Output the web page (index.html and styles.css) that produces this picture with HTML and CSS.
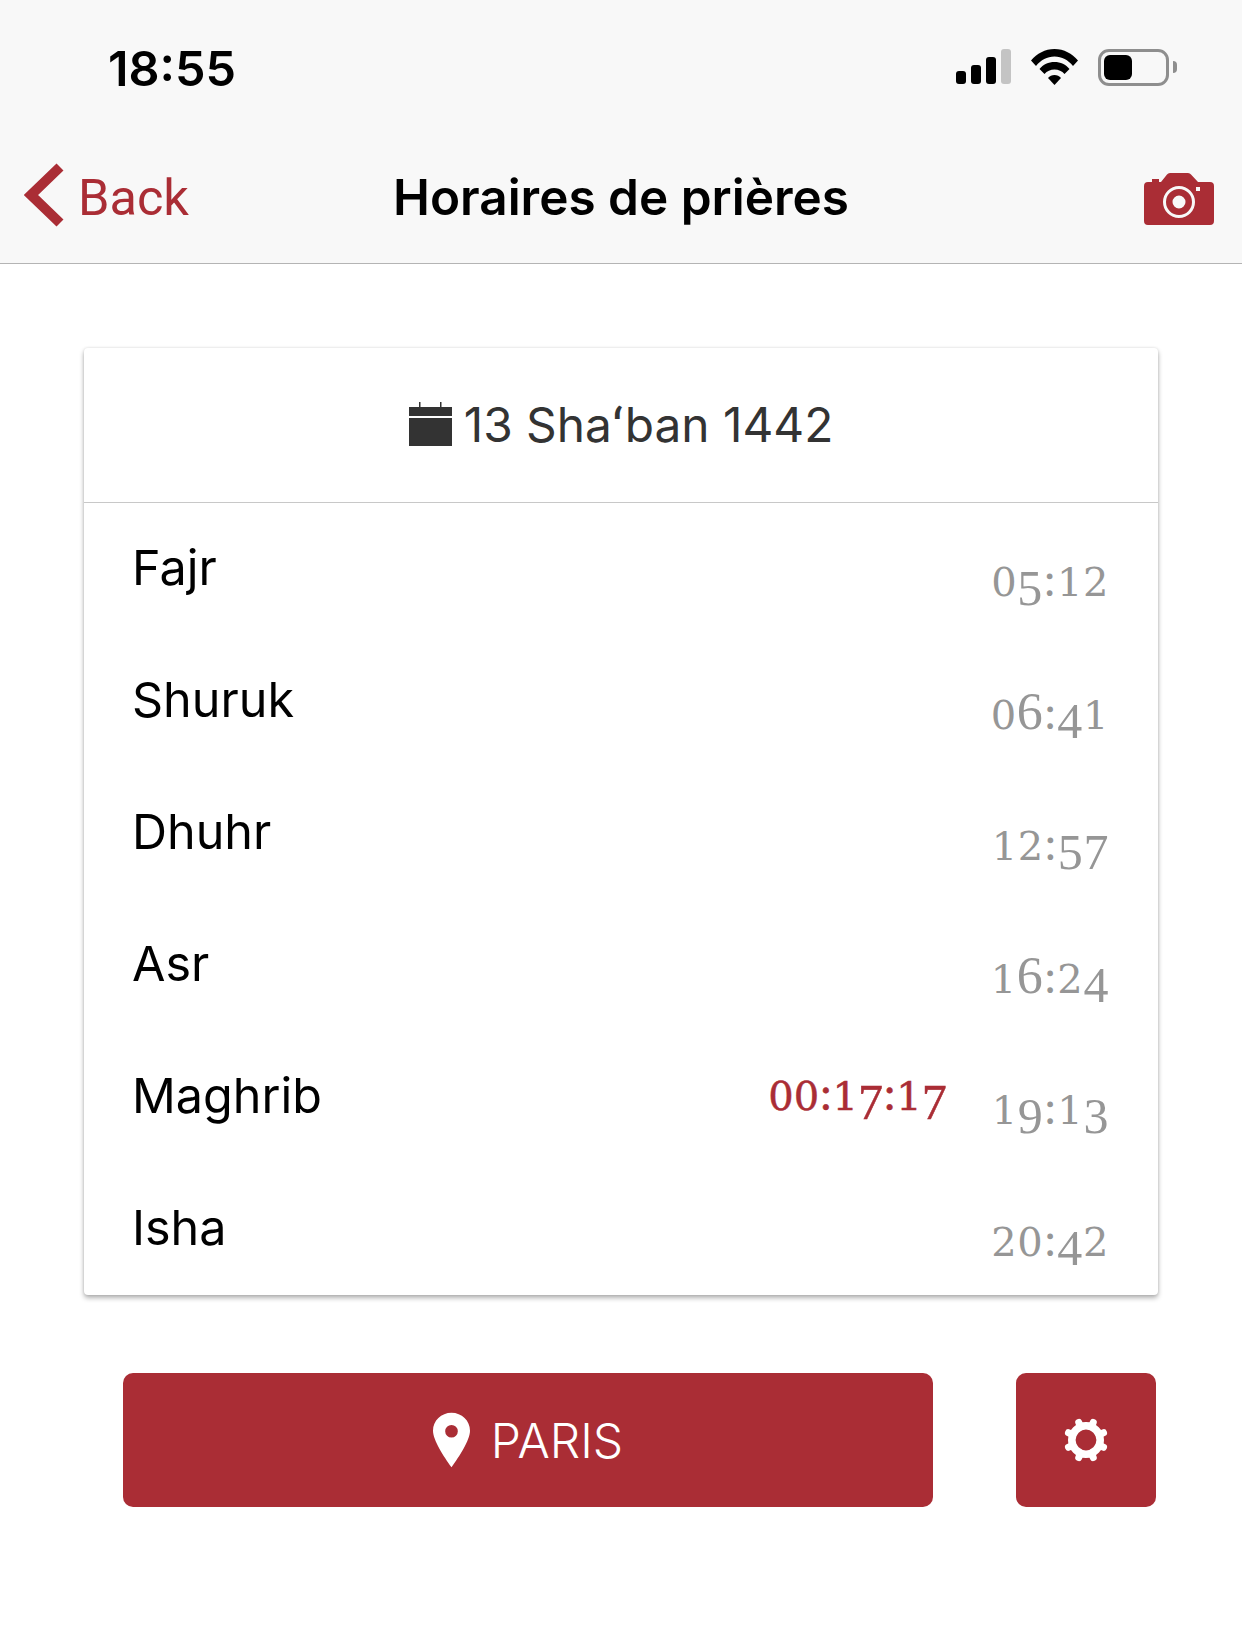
FILE: index.html
```html
<!DOCTYPE html>
<html lang="fr">
<head>
<meta charset="utf-8">
<title>Horaires de prières</title>
<link rel="stylesheet" href="styles.css">
</head>
<body>
<header class="top">
  <div class="status">
    <span class="clock">18:55</span>
    <div class="status-icons">
      <svg class="signal" width="55" height="36" viewBox="0 0 55 36"><rect x="0" y="22" width="10" height="13" rx="3" fill="#000"/><rect x="15" y="16" width="10" height="19" rx="3" fill="#000"/><rect x="30" y="8" width="10" height="27" rx="3" fill="#000"/><rect x="45" y="0" width="10" height="35" rx="3" fill="#c4c4c4"/></svg>
      <svg class="wifi" width="47" height="36" viewBox="0 0 47 36"><path d="M0 11.5C6 4.5 14 0 23.5 0S41 4.500 47 11.500L42 17C37 11 31 7.500 23.500 7.500S10 11 5 17Z" fill="#000"/><path d="M8.500 20C12 15.500 17.500 13 23.500 13S35 15.500 38.500 20L33.500 25C31 22 27.500 20.500 23.500 20.500S16 22 13.500 25Z" fill="#000"/><path d="M17 29C18.500 27 21 26 23.500 26S28.500 27 30 29L23.500 36Z" fill="#000"/></svg>
      <div class="battery"><div class="battery-level"></div></div>
      <div class="battery-nub"></div>
    </div>
  </div>
  <nav class="nav">
    <div class="back">
      <svg width="40" height="64" viewBox="0 0 40 64"><path d="M36 4 7 32 36 60" fill="none" stroke="#aa2d35" stroke-width="10"/></svg>
      <span>Back</span>
    </div>
    <h1 class="title">Horaires de prières</h1>
    <svg class="camera" width="70" height="52" viewBox="0 0 70 52"><path fill="#aa2d35" fill-rule="evenodd" d="M4 9H8V6H15V9H17L23 1.500Q24 0 26 0H44Q46 0 47 1.500L54 9H66Q70 9 70 13V48Q70 52 66 52H4Q0 52 0 48V13Q0 9 4 9ZM35 13A16 16 0 1 0 35 45 16 16 0 1 0 35 13ZM35 16A13 13 0 1 1 35 42 13 13 0 1 1 35 16ZM35 22.500A6.500 6.500 0 1 0 35 35.500 6.500 6.500 0 1 0 35 22.500ZM52 14V18H56V14Z"/></svg>
  </nav>
</header>
<main class="content">
  <section class="card">
    <div class="card-head">
      <svg width="43" height="44" viewBox="0 0 43 44"><path fill="#333" d="M0 5H10V0H11.500V5H31V0H32.500V5H43V14H0ZM0 16H43V44H0Z"/></svg>
      <span>13 Shaʻban 1442</span>
    </div>
    <div class="row"><span class="name">Fajr</span><span class="time"><i class="lo">0</i><i class="de">5</i>:<i class="lo">1</i><i class="lo">2</i></span></div>
    <div class="row"><span class="name">Shuruk</span><span class="time"><i class="lo">0</i><i class="hi">6</i>:<i class="de">4</i><i class="lo">1</i></span></div>
    <div class="row"><span class="name">Dhuhr</span><span class="time"><i class="lo">1</i><i class="lo">2</i>:<i class="de">5</i><i class="de">7</i></span></div>
    <div class="row"><span class="name">Asr</span><span class="time"><i class="lo">1</i><i class="hi">6</i>:<i class="lo">2</i><i class="de">4</i></span></div>
    <div class="row"><span class="name">Maghrib</span><span class="countdown"><i class="lo">0</i><i class="lo">0</i>:<i class="lo">1</i><i class="de">7</i>:<i class="lo">1</i><i class="de">7</i></span><span class="time"><i class="lo">1</i><i class="de">9</i>:<i class="lo">1</i><i class="de">3</i></span></div>
    <div class="row"><span class="name">Isha</span><span class="time"><i class="lo">2</i><i class="lo">0</i>:<i class="de">4</i><i class="lo">2</i></span></div>
  </section>
  <div class="actions">
    <button class="btn btn-city">
      <svg width="37" height="56" viewBox="0 0 38 56"><path fill="#fff" fill-rule="evenodd" d="M19 0C8.500 0 0 8 0 18.500 0 28 11 45 19 56 27 45 38 28 38 18.500 38 8 29.500 0 19 0ZM19 12.500A6.500 6.500 0 1 1 19 25.500 6.500 6.500 0 1 1 19 12.500Z"/></svg>
      <span>PARIS</span>
    </button>
    <button class="btn btn-gear" aria-label="Réglages">
      <svg width="46" height="46" viewBox="-23 -23 46 46"><g stroke="#fff" stroke-width="7" stroke-linecap="round"><line y1="-14" y2="-19" transform="rotate(22.500)"/><line y1="-14" y2="-19" transform="rotate(67.500)"/><line y1="-14" y2="-19" transform="rotate(112.500)"/><line y1="-14" y2="-19" transform="rotate(157.500)"/><line y1="-14" y2="-19" transform="rotate(202.500)"/><line y1="-14" y2="-19" transform="rotate(247.500)"/><line y1="-14" y2="-19" transform="rotate(292.500)"/><line y1="-14" y2="-19" transform="rotate(337.500)"/></g><circle r="14.200" fill="none" stroke="#fff" stroke-width="7.600"/></svg>
    </button>
  </div>
</main>
</body>
</html>
```
FILE: styles.css
```css
* { box-sizing: border-box; }
html, body { margin: 0; padding: 0; }
body { width: 1242px; height: 1647px; background: #fff; font-family: Inter, "Liberation Sans", sans-serif; color: #000; overflow: hidden; }

.top { height: 264px; background: #f8f8f8; border-bottom: 1px solid #b4b4b4; }
.status { height: 132px; display: flex; align-items: center; padding: 4px 65px 0 108px; justify-content: space-between; }
.clock { font-size: 48.500px; font-weight: 600; }
.status-icons { display: flex; align-items: center; margin-top: -2px; }
.signal { margin-right: 20px; }
.wifi { margin-right: 20px; }
.battery { width: 71px; height: 37px; border: 3px solid #8e8e8e; border-radius: 11px; padding: 3px; }
.battery-level { width: 28px; height: 25px; background: #000; border-radius: 6px; }
.battery-nub { width: 4px; height: 12px; background: #8e8e8e; border-radius: 0 6px 6px 0; margin-left: 4px; }

.nav { height: 131px; display: grid; grid-template-columns: 1fr auto 1fr; align-items: center; padding: 0 26px; }
.back { display: flex; align-items: center; gap: 14px; margin-left: -2px; color: #aa2d35; font-family: Roboto, sans-serif; font-size: 50.500px; }
.back svg { margin-top: -6px; }
.title { margin: 0; font-size: 49.500px; font-weight: 600; line-height: 1; }
.camera { display: block; justify-self: end; margin: 2px 2px 0 0; }

.content { padding: 84px 84px 0; }
.card { background: #fff; border-radius: 4px; box-shadow: 0 3px 5px rgba(0,0,0,.3), 0 0 3px rgba(0,0,0,.12); }
.card-head { height: 155px; border-bottom: 1px solid #c8c8c8; display: flex; align-items: center; justify-content: center; gap: 12px; font-size: 47.800px; color: #333; }
.card-head svg { margin-top: -2px; }
.row { height: 132px; display: flex; align-items: center; padding: 0 49px 3px 48px; font-size: 48.500px; }
.name { flex: 1; }

.time, .countdown { display: block; height: 50px; line-height: 50px; font-family: "Liberation Serif", serif; font-size: 48px; white-space: nowrap; }
.time { color: #969696; margin-top: 25px; letter-spacing: .6px; }
.countdown { color: #aa2d35; margin: 0 45px 3px 0; -webkit-text-stroke: .5px #aa2d35; }
.time i, .countdown i { font-style: normal; }
.lo { font-family: "DejaVu Serif", serif; font-size: 40px; }
.hi { font-size: 52px; }
.de { font-size: 50px; vertical-align: -9px; }

.actions { display: flex; gap: 83px; padding-left: 39px; margin-top: 78px; }
.btn { height: 134px; border: 0; border-radius: 10px; background: #aa2d35; color: #fff; display: flex; align-items: center; justify-content: center; padding: 0; font-family: Inter, sans-serif; }
.btn-city { width: 810px; gap: 21px; font-size: 48px; font-weight: 300; }
.btn-gear { width: 140px; }
```
